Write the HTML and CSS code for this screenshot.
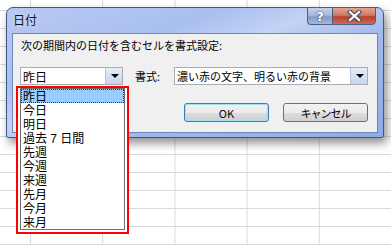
FILE: index.html
```html
<!DOCTYPE html>
<html lang="ja">
<head>
  <meta charset="UTF-8">
  <title>日付</title>
  <link rel="stylesheet" href="styles.css">
</head>
<body>

  <div class="sheet">

    <div class="dialog">
      <div class="titlebar">
        <span class="title">日付</span>
        <div class="caption-buttons">
          <button class="cap-btn help">?</button>
          <button class="cap-btn close">
            <svg width="15" height="12" viewBox="0 0 15 12">
              <path d="M3 2 L12 10 M12 2 L3 10" stroke="#4a5566" stroke-width="4.5" stroke-linecap="square"/>
              <path d="M3 2 L12 10 M12 2 L3 10" stroke="#fff" stroke-width="2.2" stroke-linecap="square"/>
            </svg>
          </button>
        </div>
      </div>

      <div class="client">
        <div class="prompt">次の期間内の日付を含むセルを書式設定:</div>

        <div class="fields">
          <div class="combo combo-period">
            <span class="combo-value">昨日</span>
            <span class="combo-arrow"></span>
          </div>
          <label class="field-label">書式:</label>
          <div class="combo combo-format">
            <span class="combo-value">濃い赤の文字、明るい赤の背景</span>
            <span class="combo-arrow"></span>
          </div>
        </div>

        <div class="actions">
          <button class="btn btn-default">OK</button>
          <button class="btn">キャンセル</button>
        </div>
      </div>
    </div>

    <div class="popup">
      <ul class="list">
        <li class="selected">昨日</li>
        <li>今日</li>
        <li>明日</li>
        <li>過去 7 日間</li>
        <li>先週</li>
        <li>今週</li>
        <li>来週</li>
        <li>先月</li>
        <li>今月</li>
        <li>来月</li>
      </ul>
    </div>

  </div>

</body>
</html>
```

FILE: styles.css
```css
* {
  box-sizing: border-box;
}

body {
  margin: 0;
  font-family: "Noto Sans CJK JP", "Noto Sans", sans-serif;
  font-size: 11px;
  color: #000;
}

/* spreadsheet behind the dialog */
.sheet {
  position: relative;
  width: 391px;
  height: 245px;
  overflow: hidden;
  background-color: #fff;
  background-image:
    linear-gradient(to right, #d5dada 1px, transparent 1px),
    linear-gradient(to bottom, #d5dada 1px, transparent 1px);
  background-size: 72.2px 100%, 100% 18px;
  background-position: 30px 0, 0 10px;
}

.dialog {
  position: absolute;
  left: 6px;
  top: 7px;
  width: 378px;
  height: 131px;
  display: flex;
  flex-direction: column;
  border: 1px solid #3b5687;
  border-radius: 7px 7px 2px 2px;
  background: linear-gradient(160deg, #b8caf2 0%, #a8bfef 30%, #c4d3f5 45%, #a2b9eb 60%, #90ace6 100%);
  box-shadow: 3px 5px 10px rgba(0, 0, 0, 0.45);
}

.titlebar {
  height: 25px;
  display: flex;
  align-items: flex-start;
  padding: 0 7px 0 6px;
}

.title {
  margin-top: 4px;
  font-size: 12px;
  line-height: 15px;
  color: #111;
  text-shadow: 0 0 4px #e4ecfc;
}

.caption-buttons {
  margin-left: auto;
  display: flex;
  margin-top: -1px;
}

.cap-btn {
  height: 18px;
  padding: 0;
  border: 1px solid #4c5f85;
  display: flex;
  align-items: center;
  justify-content: center;
  font-family: "DejaVu Sans", sans-serif;
  font-weight: bold;
  cursor: pointer;
}

.help {
  width: 25px;
  border-radius: 0 0 0 4px;
  border-right: none;
  background: linear-gradient(#c3d0ea, #a8b9dc 45%, #8399c4 55%, #a4b8df);
  color: #fff;
  font-size: 13px;
  text-shadow: 0 0 2px #3b4c6e, 0 0 1px #3b4c6e;
}

.close {
  width: 44px;
  border-radius: 0 0 4px 0;
  background: linear-gradient(#e3a290, #d27a66 45%, #b8402c 55%, #cf6a52);
}

.client {
  flex: 1;
  margin: 0 5px 4px 5px;
  background: #f0f0f0;
  border: 1px solid #6d87b8;
  padding: 5px 9px 0 7px;
}

.prompt {
  line-height: 13px;
  padding-left: 1px;
}

.fields {
  display: flex;
  align-items: center;
  margin-top: 15px;
  height: 18px;
}

.combo {
  height: 18px;
  display: flex;
  align-items: center;
  background: #fff;
  border: 1px solid #abadb3;
}

.combo-period {
  width: 103px;
}

.combo-format {
  width: 194px;
}

.combo-value {
  flex: 1;
  padding-left: 2px;
  white-space: nowrap;
  overflow: hidden;
}

.combo-period .combo-value {
  font-size: 12px;
}

.combo-arrow {
  width: 17px;
  height: 16px;
  border-left: 1px solid #b6c6dc;
  background: linear-gradient(#e4edf8, #c4d6ee);
  position: relative;
}

.combo-arrow::after {
  content: "";
  position: absolute;
  left: 5px;
  top: 6px;
  border-left: 4px solid transparent;
  border-right: 4px solid transparent;
  border-top: 4px solid #000;
}

.field-label {
  width: 39px;
  margin-left: 12px;
}

.actions {
  display: flex;
  justify-content: flex-end;
  gap: 14px;
  margin-top: 18px;
}

.btn {
  width: 85px;
  height: 19px;
  padding: 0;
  font-family: inherit;
  font-size: 11px;
  color: #000;
  border: 1px solid #707070;
  border-radius: 3px;
  background: linear-gradient(#f2f2f2 0%, #ebebeb 50%, #dddddd 51%, #cfcfcf 100%);
  letter-spacing: -1px;
}

.btn-default {
  border-color: #3c7fb1;
  box-shadow: inset 0 0 0 1px #9ee0fa;
  letter-spacing: 0;
}

/* dropdown list, framed in red */
.popup {
  position: absolute;
  left: 16px;
  top: 86px;
  width: 113px;
  padding: 0 2px 2px;
  background: #fff;
  border: 2px solid #f00;
}

.list {
  list-style: none;
  margin: 0;
  padding: 0;
  border: 1px solid #6e6e6e;
}

.list li {
  height: 14px;
  line-height: 14px;
  padding: 1px 0 0 2px;
  font-family: "Liberation Sans", "Noto Sans CJK JP", sans-serif;
  font-size: 12px;
  white-space: nowrap;
}

.list li.selected {
  background: #99ccff;
  outline: 1px dotted #333;
  outline-offset: -1px;
}
```
